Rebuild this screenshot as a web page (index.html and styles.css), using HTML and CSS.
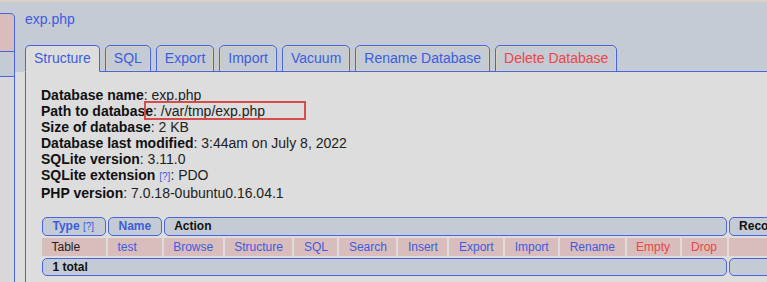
FILE: index.html
```html
<!DOCTYPE html>
<html lang="en">
<head>
    <meta charset="UTF-8">
    <title>exp.php - phpLiteAdmin</title>
    <link rel="stylesheet" href="styles.css">
</head>
<body>
    <div class="page">
        <div class="sidebar">
            <div class="sb-db"></div>
            <div class="sb-gap"></div>
            <div class="sb-rest"></div>
        </div>

        <div class="main">
            <div class="head">
                <a class="db-title" href="#">exp.php</a>
                <div class="tabs">
                    <a class="tab active" href="#">Structure</a>
                    <a class="tab" href="#">SQL</a>
                    <a class="tab" href="#">Export</a>
                    <a class="tab" href="#">Import</a>
                    <a class="tab" href="#">Vacuum</a>
                    <a class="tab" href="#">Rename Database</a>
                    <a class="tab warn" href="#">Delete Database</a>
                </div>
            </div>

            <div class="body">
                <div class="panel">
                    <div class="info">
                        <b>Database name</b>: exp.php<br>
                        <b>Path to database</b>: /var/tmp/exp.php<br>
                        <b>Size of database</b>: 2 KB<br>
                        <b>Database last modified</b>: 3:44am on July 8, 2022<br>
                        <b>SQLite version</b>: 3.11.0<br>
                        <b>SQLite extension</b> <a class="help" href="#">[?]</a>: PDO<br>
                        <b>PHP version</b>: 7.0.18-0ubuntu0.16.04.1
                    </div>

                    <table class="tbl">
                        <tr>
                            <th class="col-type"><a href="#">Type</a> <a class="help" href="#">[?]</a></th>
                            <th class="col-name"><a href="#">Name</a></th>
                            <th colspan="10">Action</th>
                            <th class="rec">Records</th>
                        </tr>
                        <tr class="row">
                            <td>Table</td>
                            <td><a href="#">test</a></td>
                            <td><a href="#">Browse</a></td>
                            <td><a href="#">Structure</a></td>
                            <td><a href="#">SQL</a></td>
                            <td><a href="#">Search</a></td>
                            <td><a href="#">Insert</a></td>
                            <td><a href="#">Export</a></td>
                            <td><a href="#">Import</a></td>
                            <td><a href="#">Rename</a></td>
                            <td><a class="warn" href="#">Empty</a></td>
                            <td><a class="warn" href="#">Drop</a></td>
                            <td class="num"></td>
                        </tr>
                        <tr class="foot">
                            <td colspan="12">1 total</td>
                            <td class="num"></td>
                        </tr>
                    </table>
                </div>
            </div>
        </div>
    </div>

    <!-- highlight drawn over the path -->
    <div class="mark"></div>
</body>
</html>
```

FILE: styles.css
```css
html {
    overflow: hidden;
}
body {
    margin: 0;
    border-top: 2px solid #d9d1c5;
    background-color: #c4cbd4;
    font-family: "Liberation Sans", Arial, sans-serif;
    font-size: 14px;
    color: #222;
}
a {
    color: #3d5ce0;
    text-decoration: none;
}
a.warn, .tab.warn {
    color: #ee4545;
}
.page {
    display: flex;
    width: 1000px;
    height: 280px;
}

/* left nav, mostly cut off */
.sidebar {
    width: 15px;
    display: flex;
    flex-direction: column;
}
.sb-db {
    margin-top: 11px;
    height: 37px;
    background-color: #d9bcbc;
    border: 1px solid #4a63e0;
    border-left: none;
    border-top-right-radius: 5px;
}
.sb-gap {
    height: 24px;
    border-right: 1px solid #4a63e0;
    border-bottom: 1px solid #4a63e0;
}
.sb-rest {
    flex: 1;
    background-color: #d8d8d8;
    border-right: 1px solid #4a63e0;
}

.main {
    flex: 1;
    display: flex;
    flex-direction: column;
}
.head {
    padding: 9px 0 0 10px;
}
.db-title {
    display: block;
    line-height: 16px;
}
.tabs {
    display: flex;
    gap: 5px;
    margin-top: 18px;
    border-bottom: 1px solid #4a63e0;
}
.tab {
    line-height: 16px;
    padding: 4px 8px 5px;
    margin-bottom: -1px;
    border: 1px solid #4a63e0;
    border-radius: 5px 5px 0 0;
    box-shadow: inset 0 0 0 1px #d6d2bd;
}
.tab.active {
    background-color: #dddddd;
    border-bottom-color: #dddddd;
    box-shadow: none;
}

.body {
    flex: 1;
    display: flex;
    padding-left: 10px;
    background-color: #dcdcdc;
}
.panel {
    flex: 1;
    padding: 15px 15px 0;
    border-left: 1px solid #4a63e0;
    background-color: #dddddd;
}
.info {
    line-height: 16px;
}
.info b {
    color: #111;
}
.help {
    font-size: 10px;
}

.tbl {
    margin: 14px 0 0 -1px;
    border-spacing: 2px;
    font-size: 12px;
}
.tbl .help {
    font-weight: normal;
}
.tbl th {
    text-align: left;
    line-height: 17px;
    padding: 0 9.5px;
    white-space: nowrap;
    color: #111;
    background-color: #c4cbd4;
    border: 1px solid #4a63e0;
    border-radius: 5px;
}
.tbl th.col-type {
    width: 43px;
}
.tbl th.col-name {
    width: 32px;
}
.tbl th.rec {
    min-width: 90px;
}
.tbl td {
    line-height: 18px;
    padding: 0 9.5px;
    white-space: nowrap;
}
.row td {
    background-color: #d9bcbc;
}
.foot td {
    line-height: 16px;
    font-weight: bold;
    color: #111;
    background-color: #c4cbd4;
    border: 1px solid #4a63e0;
    border-radius: 5px;
}
.tbl .num {
    text-align: right;
}

.mark {
    position: absolute;
    left: 144px;
    top: 101px;
    width: 162px;
    height: 19px;
    box-sizing: border-box;
    border: 2px solid #d44c4c;
}
```
